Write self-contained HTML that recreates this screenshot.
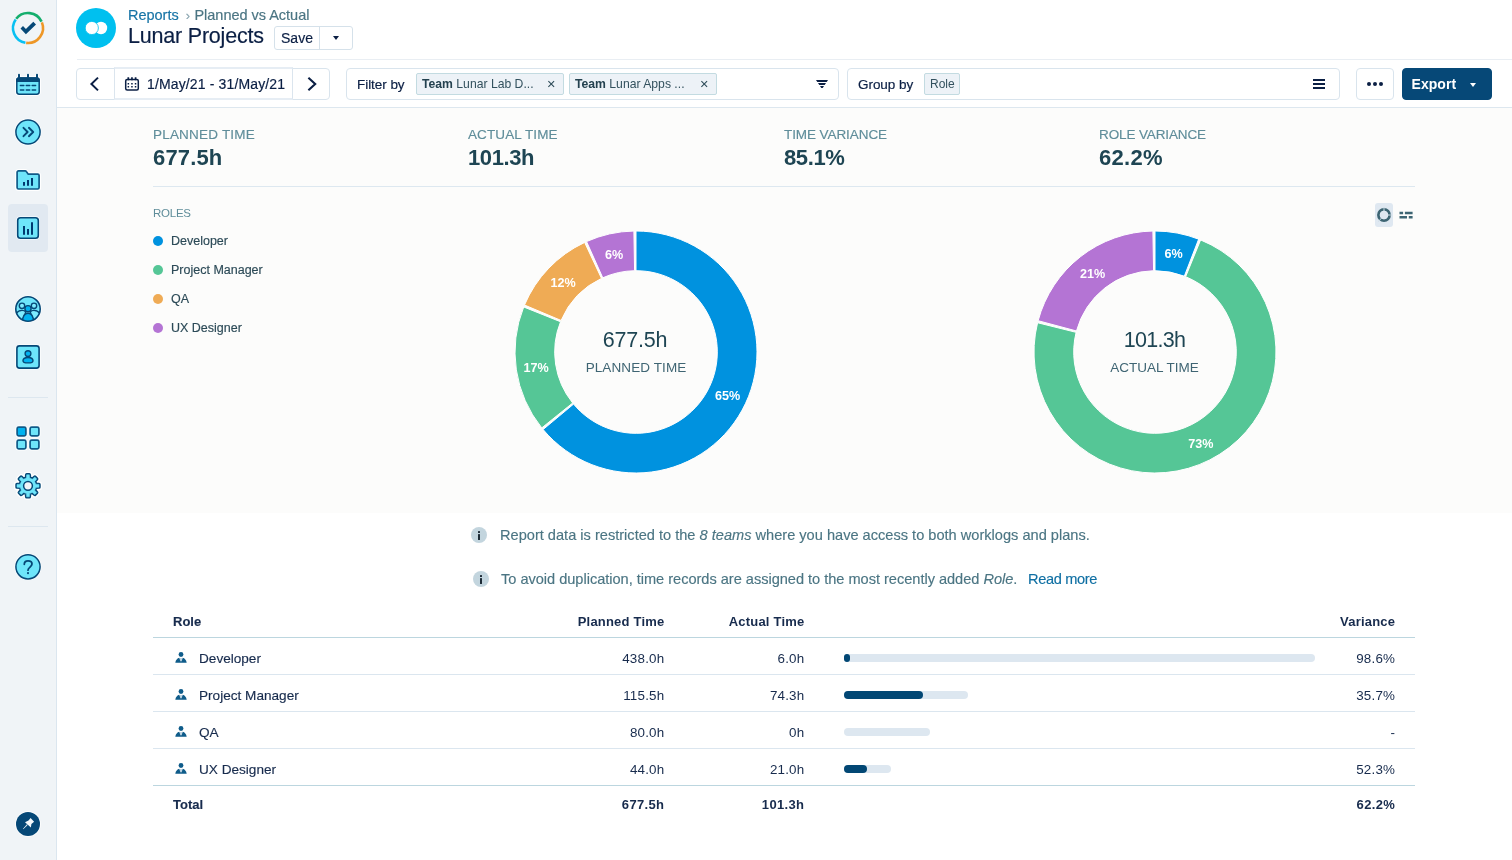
<!DOCTYPE html>
<html lang="en">
<head>
<meta charset="utf-8">
<title>Lunar Projects - Planned vs Actual</title>
<style>
*{box-sizing:border-box;margin:0;padding:0}
html,body{width:1512px;height:860px;overflow:hidden;background:#fff}
body{font-family:"Liberation Sans",Arial,sans-serif;color:#172b4d;position:relative;-webkit-font-smoothing:antialiased}
#root{position:absolute;left:0;top:0;width:1512px;height:860px;will-change:transform}
/* sidebar */
#side{position:absolute;left:0;top:0;width:57px;height:860px;background:#f0f4f7;border-right:1px solid #dbe6ef}
#side svg{position:absolute}
#side .sel{position:absolute;left:8px;top:204px;width:40px;height:48px;border-radius:4px;background:#e1e9f1}
#side .hr{position:absolute;left:8px;width:40px;height:1px;background:#dde7ef}
/* header */
#logo{position:absolute;left:76px;top:8px;width:40px;height:40px;border-radius:50%;background:#00c0ef}
#crumb{position:absolute;left:128px;top:6px;font-size:14.5px;letter-spacing:-.02px;line-height:18px;color:#4b7583;white-space:nowrap}
#crumb a{color:#1774a6;text-decoration:none}
#crumb .sep{color:#8aa5b0;margin:0 4.500px 0 7px;font-size:13px;position:relative;top:-.5px}
#title{position:absolute;left:128px;top:22.300px;font-size:21.5px;letter-spacing:-.2px;line-height:28px;color:#0b1f44;white-space:nowrap}
#save{position:absolute;left:274px;top:26px;width:79px;height:24px;border:1px solid #d5e1ea;border-radius:3px;background:#fff}
#save .t{position:absolute;left:0;top:0;width:45px;height:22px;line-height:22px;text-align:center;font-size:14px;color:#0b1f44;border-right:1px solid #d5e1ea}
#save .c{position:absolute;left:58px;top:9px;width:0;height:0;border-left:3.5px solid transparent;border-right:3.5px solid transparent;border-top:4px solid #0b1f44}
#hline{position:absolute;left:77px;top:59px;width:1435px;height:1px;background:#e9eef3}
/* toolbar */
.box{position:absolute;top:68px;height:32px;border:1px solid #d9e4ed;border-radius:4px;background:#fff}
.tag{position:absolute;top:4px;height:22px;border:1px solid #c3dbe1;border-radius:2px;background:#edf2f7;font-size:12.2px;line-height:20px;color:#33515e;white-space:nowrap;padding-left:5px}
.tag .x{position:absolute;right:7.500px;top:0;font-size:14.500px;color:#2c4a57}
.tag b{color:#24414f}
.lbl{position:absolute;top:0;line-height:31px;font-size:13.5px;letter-spacing:-.05px;color:#0b1f44;white-space:nowrap}
#tline{position:absolute;left:57px;top:107px;width:1455px;height:1px;background:#dde7ef}
#panel{position:absolute;left:57px;top:108px;width:1455px;height:405px;background:#fcfcfb}

.st{position:absolute;top:126px;white-space:nowrap}
.st .k{font-size:13.5px;line-height:17px;color:#5f8d9a}
.st .v{font-size:22px;line-height:26px;font-weight:bold;color:#1e4553;margin-top:1.500px}
#pline{position:absolute;left:153px;top:186px;width:1262px;height:1px;background:#dde8f0}
#roles{position:absolute;left:153px;top:206px;font-size:11.5px;line-height:14px;color:#5f8d9a;letter-spacing:-.25px}
.lg{position:absolute;left:153px;font-size:12.5px;line-height:16px;color:#2c4a57;white-space:nowrap;padding-left:18px}
.lg i{position:absolute;left:0;top:3px;width:10px;height:10px;border-radius:50%}
#charts{position:absolute;left:0;top:0;width:1512px;height:860px;pointer-events:none}
.pl{font-size:12.6px;font-weight:bold;fill:#fff;font-family:"Liberation Sans",Arial,sans-serif}
.cv{font-size:21.5px;fill:#1e4553;font-family:"Liberation Sans",Arial,sans-serif}
.ck{font-size:13.5px;fill:#3f6573;font-family:"Liberation Sans",Arial,sans-serif}
.info{position:absolute;font-size:14.6px;line-height:18px;color:#4b7583;white-space:nowrap}
.info a{color:#0f6fa3;text-decoration:none;position:absolute;left:527px;top:0;letter-spacing:-.35px}
.ii{position:absolute;width:16px;height:16px;border-radius:50%;background:#c3d5de}
.ii:before{content:"";position:absolute;left:7px;top:3.5px;width:2px;height:2px;background:#1d2b36;border-radius:.5px}
.ii:after{content:"";position:absolute;left:7px;top:7px;width:2px;height:5.5px;background:#1d2b36;border-radius:.5px}
#tbl{position:absolute;left:153px;top:601px;width:1262px}
.r{position:absolute;left:0;width:1262px;height:37px;border-top:1px solid #dbe6ef;font-size:13.6px;line-height:41px;color:#172b4d}
.r span{position:absolute;top:0;white-space:nowrap}
.r .n{left:46px}
.r .p{right:750.800px;font-size:13.4px;letter-spacing:.2px;margin-right:-.2px}
.r .a{right:610.800px;font-size:13.4px;letter-spacing:.2px;margin-right:-.2px}
.r .x{right:20px;font-size:13.4px;letter-spacing:.2px;margin-right:-.2px}
.r.h,.r.f,.r.h span,.r.f span{font-weight:bold;font-size:13px}
.r.h{line-height:42px}
.r.f{line-height:38px}
.r.f .p,.r.f .a,.r.f .x{letter-spacing:.35px}
.r.h{border-top:0}
.r.h .n,.r.f .n{left:20px}
.r.d1{border-top-color:#bcd6df}
.bar{position:absolute;left:691px;top:16px;height:8px;border-radius:4px;background:#dde7f0}
.bar i{position:absolute;left:0;top:0;height:8px;border-radius:4px;background:#024774}
.r svg{position:absolute;left:22px;top:14px}
#title,#save .t,.lbl,#crumb{-webkit-text-stroke:.18px currentColor}
.info,.r .n,.lg,.cv,.ck,.st .k{-webkit-text-stroke:.15px currentColor}
</style>
</head>
<body>
<div id="root">
<div id="side">
  <div class="sel"></div>
  <div class="hr" style="top:397px"></div>
  <div class="hr" style="top:526px"></div>
<svg width="57" height="860" viewBox="0 0 57 860" style="left:0;top:0">
<path d="M16.18 18.77A15 15 0 0 1 41.59 21.66" fill="none" stroke="#14ae6d" stroke-width="2.6"/>
<path d="M41.91 22.38A15 15 0 0 1 26.17 42.89" fill="none" stroke="#ee9727" stroke-width="2.6"/>
<path d="M25.40 42.77A15 15 0 0 1 15.71 19.40" fill="none" stroke="#08c0f2" stroke-width="2.6"/>
<path d="M20.5 28.4L23 26L25.9 28.9L33.3 21.8L36 24.4L25.9 34.2Z" fill="#064877"/>
<g stroke="#fff" stroke-width="3.4" stroke-linejoin="round" fill="#fff"><rect x="16.8" y="78" width="22.4" height="16.2" rx="2.4"/><path d="M19 74.6v3M28 74.6v3M37 74.6v3" stroke-width="4"/></g>
<rect x="16.8" y="78" width="22.4" height="16.2" rx="2.4" fill="#6ee5fa" stroke="#064877" stroke-width="1.5"/>
<path d="M16.8 81.3V80.4A2.4 2.4 0 0 1 19.2 78H36.8A2.4 2.4 0 0 1 39.200 80.4V81.3Z" fill="#064877" stroke="#064877" stroke-width="1.5"/>
<path d="M19 74.8v3.4M28 74.8v3.4M37 74.8v3.4" stroke="#064877" stroke-width="2" stroke-linecap="round"/>
<path d="M20.4 85.5h3.4M26.3 85.5h3.4M32.2 85.5h3.4M20.4 90h3.4M26.3 90h3.4M32.2 90h3.4" stroke="#064877" stroke-width="1.5" stroke-linecap="round"/>
<circle cx="28" cy="132" r="13.4" fill="#fff"/><circle cx="28" cy="132" r="12.1" fill="#6ee5fa" stroke="#064877" stroke-width="1.5"/>
<path d="M23.5 127.8L27.6 132L23.5 136.2M28.9 127.8L33.2 132L28.900 136.2" fill="none" stroke="#064877" stroke-width="1.9" stroke-linecap="round" stroke-linejoin="round"/>
<path d="M17.100 172.3A1.4 1.4 0 0 1 18.5 170.9H25.2A1.4 1.4 0 0 1 26.3 171.5L28.3 174.200H37.700A1.400 1.400 0 0 1 39.100 175.600V187.600A1.400 1.400 0 0 1 37.700 189.000H18.500A1.400 1.400 0 0 1 17.100 187.600Z" fill="#fff" stroke="#fff" stroke-width="4" stroke-linejoin="round"/>
<path d="M17.100 172.3A1.4 1.4 0 0 1 18.5 170.9H25.2A1.4 1.4 0 0 1 26.3 171.5L28.3 174.200H37.700A1.400 1.400 0 0 1 39.100 175.600V187.600A1.400 1.400 0 0 1 37.700 189.000H18.500A1.400 1.400 0 0 1 17.100 187.600Z" fill="#6ee5fa" stroke="#0f5a88" stroke-width="1.7" stroke-linejoin="round"/>
<path d="M24 182.1V185.700M28 180.100V185.700M32 178.1V185.700" stroke="#003a70" stroke-width="2"/>
<rect x="16.2" y="216.2" width="23.6" height="23.6" rx="4" fill="#f4f9fd"/>
<rect x="17.7" y="217.7" width="20.6" height="20.6" rx="2.8" fill="#6ee5fa" stroke="#064877" stroke-width="1.6"/>
<path d="M24 226V234.800M28 229.100V234.800M32 222.200V234.800" stroke="#003a70" stroke-width="2"/>
<circle cx="28" cy="309" r="13.6" fill="#fff"/>
<clipPath id="pc"><circle cx="28" cy="309" r="12.2"/></clipPath>
<circle cx="28" cy="309" r="12.2" fill="#6ee5fa"/>
<g clip-path="url(#pc)" stroke="#064877" stroke-width="1.4"><circle cx="22" cy="305.800" r="2.7" fill="#7eecff"/><circle cx="34" cy="305.800" r="2.7" fill="#7eecff"/><path d="M14.5 322C14.5 313 18 310.4 22 310.4C24 310.400 25 311 25.800 312L22 322Z" fill="#7eecff"/><path d="M41.5 322C41.500 313 38 310.400 34 310.400C32 310.400 31 311 30.200 312L34 322Z" fill="#7eecff"/><circle cx="28" cy="308.700" r="3.100" fill="#00b2f0"/><path d="M22.300 324C22.300 316.500 24 313.300 28 313.300C32 313.300 33.700 316.500 33.700 324Z" fill="#00b2f0"/></g>
<circle cx="28" cy="309" r="12.2" fill="none" stroke="#064877" stroke-width="1.6"/>
<rect x="15.4" y="344.400" width="25.2" height="25.2" rx="4" fill="#fff"/>
<rect x="16.9" y="345.900" width="22.2" height="22.2" rx="2.600" fill="#6ee5fa" stroke="#064877" stroke-width="1.6"/>
<circle cx="28" cy="353.600" r="2.900" fill="#00b2f0" stroke="#064877" stroke-width="1.4"/>
<path d="M23 360.700C23 358.600 25 357.500 28 357.500C31 357.500 33 358.600 33 360.700C33 362.300 31.500 362.900 28 362.900C24.500 362.900 23 362.300 23 360.700Z" fill="#00b2f0" stroke="#064877" stroke-width="1.4"/>
<rect x="15.500000000000002" y="425.5" width="12" height="12" rx="3" fill="#fff"/>
<rect x="28.5" y="425.5" width="12" height="12" rx="3" fill="#fff"/>
<rect x="15.500000000000002" y="438.5" width="12" height="12" rx="3" fill="#fff"/>
<rect x="28.5" y="438.5" width="12" height="12" rx="3" fill="#fff"/>
<rect x="17.1" y="427.1" width="8.8" height="8.8" rx="1.600" fill="#00b2f0" stroke="#0f5a88" stroke-width="1.700"/>
<rect x="30.1" y="427.1" width="8.8" height="8.8" rx="1.600" fill="#6ee5fa" stroke="#0f5a88" stroke-width="1.700"/>
<rect x="17.1" y="440.1" width="8.8" height="8.8" rx="1.600" fill="#6ee5fa" stroke="#0f5a88" stroke-width="1.700"/>
<rect x="30.1" y="440.1" width="8.8" height="8.8" rx="1.600" fill="#6ee5fa" stroke="#0f5a88" stroke-width="1.700"/>
<path d="M26.40 478.06L26.65 474.78L29.35 474.78L29.60 478.06L32.34 479.20L34.84 477.06L36.74 478.96L34.60 481.46L35.74 484.20L39.02 484.45L39.02 487.15L35.74 487.40L34.60 490.14L36.74 492.64L34.84 494.54L32.34 492.40L29.60 493.54L29.35 496.82L26.65 496.82L26.40 493.54L23.66 492.40L21.16 494.54L19.26 492.64L21.40 490.14L20.26 487.40L16.98 487.15L16.98 484.45L20.26 484.20L21.40 481.46L19.26 478.96L21.16 477.06L23.66 479.20Z" fill="#fff" stroke="#fff" stroke-width="6" stroke-linejoin="round"/>
<path d="M26.40 478.06L26.65 474.78L29.35 474.78L29.60 478.06L32.34 479.20L34.84 477.06L36.74 478.96L34.60 481.46L35.74 484.20L39.02 484.45L39.02 487.15L35.74 487.40L34.60 490.14L36.74 492.64L34.84 494.54L32.34 492.40L29.60 493.54L29.35 496.82L26.65 496.82L26.40 493.54L23.66 492.40L21.16 494.54L19.26 492.64L21.40 490.14L20.26 487.40L16.98 487.15L16.98 484.45L20.26 484.20L21.40 481.46L19.26 478.96L21.16 477.06L23.66 479.20Z" fill="#064877" stroke="#064877" stroke-width="3.4" stroke-linejoin="round"/>
<path d="M26.40 478.06L26.65 474.78L29.35 474.78L29.60 478.06L32.34 479.20L34.84 477.06L36.74 478.96L34.60 481.46L35.74 484.20L39.02 484.45L39.02 487.15L35.74 487.40L34.60 490.14L36.74 492.64L34.84 494.54L32.34 492.40L29.60 493.54L29.35 496.82L26.65 496.82L26.40 493.54L23.66 492.40L21.16 494.54L19.26 492.64L21.40 490.14L20.26 487.40L16.98 487.15L16.98 484.45L20.26 484.20L21.40 481.46L19.26 478.96L21.16 477.06L23.66 479.20Z" fill="#6ee5fa" stroke="#6ee5fa" stroke-width=".5" stroke-linejoin="round"/>
<circle cx="28" cy="485.800" r="4.4" fill="#f0f4f8" stroke="#064877" stroke-width="1.500"/>
<circle cx="28" cy="566.800" r="13.4" fill="#fff"/><circle cx="28" cy="566.800" r="12.1" fill="#6ee5fa" stroke="#064877" stroke-width="1.500"/>
<path d="M24.300 564.300C24.300 562 25.900 560.800 28 560.800C30.300 560.800 32 562.100 32 564.100C32 567 28 567.200 28 570.200" fill="none" stroke="#064877" stroke-width="1.800" stroke-linecap="round"/>
<rect x="27" y="572.100" width="2" height="2" fill="#0f5a88"/>
<circle cx="28" cy="824" r="12.800" fill="#fff"/><circle cx="28" cy="824" r="12" fill="#064877"/>
<path d="M30.600 817.900L34.100 821.700L31.400 824L30.900 827.600L25 822.300L28.500 820.500Z" fill="#f4f8fb"/><path d="M27.400 825L23.300 828.800L27 824.600Z" fill="#f4f8fb" stroke="#f4f8fb" stroke-width=".5"/>
</svg>
</div>

<div id="logo"><svg width="40" height="40" viewBox="0 0 40 40" style="position:absolute;left:0;top:0"><circle cx="25" cy="20" r="6.2" fill="#fff"/><circle cx="15.800" cy="20" r="6.600" fill="#fff" stroke="#00c0ef" stroke-width=".8"/></svg></div>
<div id="crumb"><a>Reports</a><span class="sep">›</span>Planned vs Actual</div>
<div id="title">Lunar Projects</div>
<div id="save"><div class="t">Save</div><div class="c"></div></div>
<div id="hline"></div>

<div class="box" style="left:76px;width:254px" id="datenav">
  <div style="position:absolute;left:37px;top:-2px;width:179px;height:33px;border:1px solid #dbe5ee;border-top:2px solid #e6edf4;border-bottom:2px solid #e6edf4;background:#fff"></div>
  <svg width="254" height="32" viewBox="76 68 254 32" style="position:absolute;left:-1px;top:-1px">
    <path d="M98 77.600L91.400 84L98 90.400" fill="none" stroke="#0b1f44" stroke-width="2"/>
    <path d="M308.400 77.700L315.200 84L308.400 90.300" fill="none" stroke="#0b1f44" stroke-width="2.100"/>
    <rect x="125.700" y="79.600" width="12.600" height="10.500" rx="1.500" fill="none" stroke="#0b1f44" stroke-width="1.500"/>
    <path d="M128.300 77.300v3M131.950 77.300v3M135.600 77.300v3" stroke="#0b1f44" stroke-width="1.700"/>
    <path d="M127.600 83.100h1.500v1.500h-1.500zM131.200 83.100h1.500v1.500h-1.500zM134.800 83.100h1.500v1.500h-1.500zM127.600 85.900h1.500v1.500h-1.500zM131.200 85.900h1.500v1.500h-1.500zM134.800 85.900h1.500v1.500h-1.500z" fill="#0b1f44"/>
  </svg>
  <div class="lbl" style="left:70px;font-size:14px;letter-spacing:.14px;line-height:30px">1/May/21 - 31/May/21</div>
</div>
<div class="box" style="left:346px;width:493px" id="filter">
  <div class="lbl" style="left:10px">Filter by</div>
  <div class="tag" style="left:69px;width:148px"><b>Team</b> Lunar Lab D...<span class="x">×</span></div>
  <div class="tag" style="left:222px;width:148px"><b>Team</b> Lunar Apps ...<span class="x">×</span></div>
  <svg width="14" height="10" viewBox="815 79 14 10" style="position:absolute;left:468px;top:10px"><path d="M816 80H828L826.700 82H817.300ZM818 83H826L824.700 85H819.300ZM820 86H824L822.700 88H821.300Z" fill="#0b1f44"/></svg>
</div>
<div class="box" style="left:847px;width:493px" id="group">
  <div class="lbl" style="left:10px">Group by</div>
  <div class="tag" style="left:76px;width:36px;font-size:12px">Role</div>
  <div style="position:absolute;left:465px;top:10px;width:12px;height:10px;border-top:2px solid #0b1f44;border-bottom:2px solid #0b1f44"><div style="position:absolute;left:0;top:2px;width:12px;height:2px;background:#0b1f44"></div></div>
</div>
<div class="box" style="left:1356px;width:38px" id="more"><svg width="36" height="30" viewBox="0 0 36 30" style="position:absolute;left:0;top:0"><circle cx="12" cy="15" r="2" fill="#0b1f44"/><circle cx="18" cy="15" r="2" fill="#0b1f44"/><circle cx="24" cy="15" r="2" fill="#0b1f44"/></svg></div>
<div class="box" style="left:1402px;width:90px;background:#064877;border-color:#064877" id="export"><div style="position:absolute;left:8.500px;top:0;line-height:30px;font-size:14px;font-weight:bold;color:#fff;letter-spacing:.05px">Export</div><div style="position:absolute;left:67px;top:13.500px;border-left:3.500px solid transparent;border-right:3.500px solid transparent;border-top:4px solid #fff"></div></div>
<div id="tline"></div>
<div id="panel"></div>
<div class="st" style="left:153px"><div class="k" style="letter-spacing:0.2px">PLANNED TIME</div><div class="v" style="letter-spacing:.15px">677.5h</div></div><div class="st" style="left:468px"><div class="k" style="letter-spacing:0.1px">ACTUAL TIME</div><div class="v" style="letter-spacing:-.4px">101.3h</div></div><div class="st" style="left:784px"><div class="k" style="letter-spacing:-0.08px">TIME VARIANCE</div><div class="v" style="letter-spacing:-.4px">85.1%</div></div><div class="st" style="left:1099px"><div class="k" style="letter-spacing:-0.12px">ROLE VARIANCE</div><div class="v" style="letter-spacing:.3px">62.2%</div></div>
<div style="position:absolute;left:1375px;top:203px;width:18px;height:24px;border-radius:3px;background:#dfe8f1"></div>
<svg width="40" height="24" viewBox="1375 203 40 24" style="position:absolute;left:1375px;top:203px">
<circle cx="1384" cy="215" r="5.600" fill="none" stroke="#3d6573" stroke-width="2.700"/>
<path d="M1384 215V207M1384 215H1392M1384 215L1378.500 221.500" stroke="#c9d9e2" stroke-width="1"/>
<circle cx="1384" cy="215" r="4.200" fill="#dfe8f1"/>
<path d="M1399.500 211.700h3.600v2.500h-3.600zM1404.900 211.700h7.700v2.500h-7.700zM1399.500 216h7.500v2.500h-7.500zM1408.800 216h3.800v2.500h-3.800z" fill="#3d6573"/>
</svg>
<div id="pline"></div>
<div id="roles">ROLES</div>
<div class="lg" style="top:233px"><i style="background:#0092df"></i>Developer</div>
<div class="lg" style="top:262px"><i style="background:#55c696"></i>Project Manager</div>
<div class="lg" style="top:291px"><i style="background:#efab55"></i>QA</div>
<div class="lg" style="top:320px"><i style="background:#b474d4"></i>UX Designer</div>
<svg id="charts" width="1512" height="860" viewBox="0 0 1512 860">
<path d="M636.00 231.00A121 121 0 1 1 543.10 429.53L573.58 404.09A81.3 81.3 0 1 0 636.00 270.70Z" fill="#0092df" stroke="#fff" stroke-width="1"/>
<path d="M541.76 427.90A121 121 0 0 1 523.69 306.98L560.54 321.75A81.3 81.3 0 0 0 572.68 403.00Z" fill="#55c696" stroke="#fff" stroke-width="1"/>
<path d="M524.49 305.03A121 121 0 0 1 584.63 242.44L601.49 278.39A81.3 81.3 0 0 0 561.08 320.44Z" fill="#efab55" stroke="#fff" stroke-width="1"/>
<path d="M586.55 241.56A121 121 0 0 1 633.89 231.02L634.58 270.71A81.3 81.3 0 0 0 602.78 277.80Z" fill="#b474d4" stroke="#fff" stroke-width="1"/>
<text x="727.6" y="400.3" text-anchor="middle" class="pl">65%</text>
<text x="536.0" y="372.4" text-anchor="middle" class="pl">17%</text>
<text x="563.1" y="287.3" text-anchor="middle" class="pl">12%</text>
<text x="614.0" y="258.7" text-anchor="middle" class="pl">6%</text>
<text x="635" y="346.700" text-anchor="middle" class="cv" style="letter-spacing:-.2px">677.5h</text>
<text x="636" y="371.900" text-anchor="middle" class="ck" style="letter-spacing:.1px">PLANNED TIME</text>
<path d="M1155.00 231.00A121 121 0 0 1 1198.65 239.15L1184.33 276.17A81.3 81.3 0 0 0 1155.00 270.70Z" fill="#0092df" stroke="#fff" stroke-width="1"/>
<path d="M1200.61 239.93A121 121 0 1 1 1037.59 322.74L1076.11 332.34A81.3 81.3 0 1 0 1185.65 276.70Z" fill="#55c696" stroke="#fff" stroke-width="1"/>
<path d="M1038.12 320.70A121 121 0 0 1 1152.89 231.02L1153.58 270.71A81.3 81.3 0 0 0 1076.47 330.97Z" fill="#b474d4" stroke="#fff" stroke-width="1"/>
<text x="1173.6" y="258.0" text-anchor="middle" class="pl">6%</text>
<text x="1200.8" y="447.6" text-anchor="middle" class="pl">73%</text>
<text x="1092.7" y="277.7" text-anchor="middle" class="pl">21%</text>
<text x="1154.500" y="346.700" text-anchor="middle" class="cv" style="letter-spacing:-.7px">101.3h</text>
<text x="1154.500" y="371.900" text-anchor="middle" class="ck" style="letter-spacing:0px">ACTUAL TIME</text>
</svg>
<div class="ii" style="left:471px;top:527px"></div>
<div class="info" style="left:500px;top:526px">Report data is restricted to the <i>8 teams</i> where you have access to both worklogs and plans.</div>
<div class="ii" style="left:473px;top:571px"></div>
<div class="info" style="left:501px;top:570px;letter-spacing:-.025px">To avoid duplication, time records are assigned to the most recently added <i>Role</i>. <a>Read more</a></div>
<div id="tbl">
<div class="r h" style="top:0"><span class="n">Role</span><span class="p">Planned Time</span><span class="a">Actual Time</span><span class="x">Variance</span></div>
<div class="r d1" style="top:36px"><svg width="12" height="11" viewBox="0 0 12 11"><circle cx="6" cy="2.500" r="2.400" fill="#0f5c8a"/><path d="M0.300 10.700C0.700 8.200 2.300 6.100 4.300 5.800L5.500 9.400L6 8.900L6.500 9.400L7.700 5.800C9.700 6.100 11.300 8.200 11.700 10.700Z" fill="#0f5c8a"/><path d="M5.400 6.100H6.600L6.300 7.100L6.700 8.300L6 9L5.300 8.300L5.700 7.100Z" fill="#6f9fc0"/></svg><span class="n">Developer</span><span class="p">438.0h</span><span class="a">6.0h</span><div class="bar" style="width:471px"><i style="width:6.45px"></i></div><span class="x">98.6%</span></div>
<div class="r" style="top:73px"><svg width="12" height="11" viewBox="0 0 12 11"><circle cx="6" cy="2.500" r="2.400" fill="#0f5c8a"/><path d="M0.300 10.700C0.700 8.200 2.300 6.100 4.300 5.800L5.500 9.400L6 8.900L6.500 9.400L7.700 5.800C9.700 6.100 11.300 8.200 11.700 10.700Z" fill="#0f5c8a"/><path d="M5.400 6.100H6.600L6.300 7.100L6.700 8.300L6 9L5.300 8.300L5.700 7.100Z" fill="#6f9fc0"/></svg><span class="n">Project Manager</span><span class="p">115.5h</span><span class="a">74.3h</span><div class="bar" style="width:124px"><i style="width:79.200px"></i></div><span class="x">35.7%</span></div>
<div class="r" style="top:110px"><svg width="12" height="11" viewBox="0 0 12 11"><circle cx="6" cy="2.500" r="2.400" fill="#0f5c8a"/><path d="M0.300 10.700C0.700 8.200 2.300 6.100 4.300 5.800L5.500 9.400L6 8.900L6.500 9.400L7.700 5.800C9.700 6.100 11.300 8.200 11.700 10.700Z" fill="#0f5c8a"/><path d="M5.400 6.100H6.600L6.300 7.100L6.700 8.300L6 9L5.300 8.300L5.700 7.100Z" fill="#6f9fc0"/></svg><span class="n">QA</span><span class="p">80.0h</span><span class="a">0h</span><div class="bar" style="width:86px"></div><span class="x">-</span></div>
<div class="r" style="top:147px"><svg width="12" height="11" viewBox="0 0 12 11"><circle cx="6" cy="2.500" r="2.400" fill="#0f5c8a"/><path d="M0.300 10.700C0.700 8.200 2.300 6.100 4.300 5.800L5.500 9.400L6 8.900L6.500 9.400L7.700 5.800C9.700 6.100 11.300 8.200 11.700 10.700Z" fill="#0f5c8a"/><path d="M5.400 6.100H6.600L6.300 7.100L6.700 8.300L6 9L5.300 8.300L5.700 7.100Z" fill="#6f9fc0"/></svg><span class="n">UX Designer</span><span class="p">44.0h</span><span class="a">21.0h</span><div class="bar" style="width:47px"><i style="width:22.6px"></i></div><span class="x">52.3%</span></div>
<div class="r f d1" style="top:184px"><span class="n">Total</span><span class="p">677.5h</span><span class="a">101.3h</span><span class="x">62.2%</span></div>
</div>
</div>
</body>
</html>
